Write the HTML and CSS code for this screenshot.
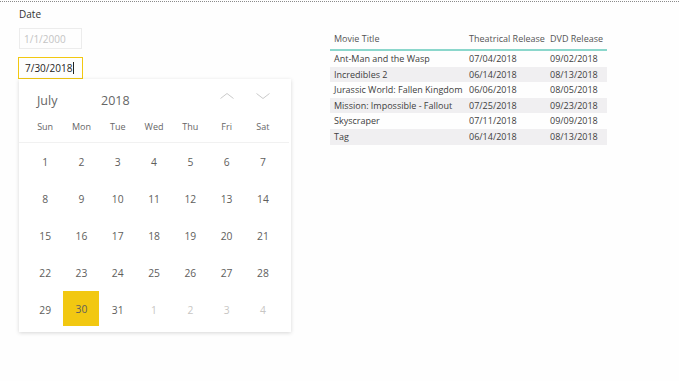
FILE: index.html
```html
<!DOCTYPE html>
<html>
<head>
<meta charset="utf-8">
<link rel="stylesheet" href="styles.css">
</head>
<body>
<div class="topline"></div>
<div class="page">
  <div class="filter">
    <div class="label">Date</div>
    <div class="input start">1/1/2000</div>
    <div class="input end">7/30/2018<span class="caret"></span></div>
    <div class="popup">
      <div class="cal-head">
        <span class="month">July</span>
        <span class="year">2018</span>
        <span class="navs">
          <svg class="chev" width="14" height="6" viewBox="0 0 14 6"><path d="M0.5 5.5 L7 0.5 L13.5 5.5" fill="none" stroke="#cacaca" stroke-width="1"/></svg>
          <svg class="chev" width="14" height="6" viewBox="0 0 14 6"><path d="M0.5 0.5 L7 5.5 L13.5 0.5" fill="none" stroke="#cacaca" stroke-width="1"/></svg>
        </span>
      </div>
      <div class="weekdays">
        <span>Sun</span><span>Mon</span><span>Tue</span><span>Wed</span><span>Thu</span><span>Fri</span><span>Sat</span>
      </div>
      <div class="sep"></div>
      <div class="days">
        <span>1</span><span>2</span><span>3</span><span>4</span><span>5</span><span>6</span><span>7</span>
        <span>8</span><span>9</span><span>10</span><span>11</span><span>12</span><span>13</span><span>14</span>
        <span>15</span><span>16</span><span>17</span><span>18</span><span>19</span><span>20</span><span>21</span>
        <span>22</span><span>23</span><span>24</span><span>25</span><span>26</span><span>27</span><span>28</span>
        <span>29</span><span><b class="sel">30</b></span><span>31</span><span class="other">1</span><span class="other">2</span><span class="other">3</span><span class="other">4</span>
      </div>
    </div>
  </div>
  <div class="tablewrap">
    <div class="row head"><span class="c1">Movie Title</span><span class="c2">Theatrical Release</span><span class="c3">DVD Release</span></div>
    <div class="row"><span class="c1">Ant-Man and the Wasp</span><span class="c2">07/04/2018</span><span class="c3">09/02/2018</span></div>
    <div class="row alt"><span class="c1">Incredibles 2</span><span class="c2">06/14/2018</span><span class="c3">08/13/2018</span></div>
    <div class="row"><span class="c1">Jurassic World: Fallen Kingdom</span><span class="c2">06/06/2018</span><span class="c3">08/05/2018</span></div>
    <div class="row alt"><span class="c1">Mission: Impossible - Fallout</span><span class="c2">07/25/2018</span><span class="c3">09/23/2018</span></div>
    <div class="row"><span class="c1">Skyscraper</span><span class="c2">07/11/2018</span><span class="c3">09/09/2018</span></div>
    <div class="row alt"><span class="c1">Tag</span><span class="c2">06/14/2018</span><span class="c3">08/13/2018</span></div>
  </div>
</div>
</body>
</html>
```

FILE: styles.css
```css
html, body {
  margin: 0;
  padding: 0;
  background: #fefefe;
  font-family: "Open Sans", "Noto Sans", sans-serif;
  color: #333;
  width: 679px;
  height: 381px;
  overflow: hidden;
}
.topline {
  margin-top: 1px;
  border-top: 1px dotted #8a8a8a;
}
.page {
  display: flex;
  align-items: flex-start;
}
.filter {
  padding-left: 18px;
  width: 274px;
}
.label {
  margin-left: 1px;
  margin-top: 5px;
  font-size: 10px;
  line-height: 14px;
  color: #333;
}
.input {
  box-sizing: border-box;
  font-size: 10px;
  display: flex;
  align-items: center;
}
.input.start {
  margin-top: 7px;
  margin-left: 1px;
  width: 63px;
  height: 21px;
  border: 1px solid #ececec;
  padding-left: 4px;
  color: #c4c4c4;
}
.input.end {
  margin-top: 8px;
  width: 65px;
  height: 22px;
  border: 1px solid #f2c811;
  padding-left: 6px;
  color: #252423;
}
.caret {
  display: inline-block;
  width: 1px;
  height: 12px;
  background: #222;
  margin-left: 1px;
}
.popup {
  margin-left: 1px;
  width: 272px;
  height: 253px;
  box-sizing: border-box;
  background: #fff;
  box-shadow: 0 1px 4px rgba(0,0,0,0.16);
}
.cal-head {
  display: flex;
  align-items: center;
  height: 18px;
  padding-top: 12px;
  padding-left: 18px;
  font-size: 12.5px;
  color: #666;
}
.month { width: 64px; }
.year { flex: 1; }
.navs {
  display: flex;
  gap: 22px;
  margin-right: 21px;
  margin-top: -8px;
}
.chev { display: block; }
.weekdays {
  display: grid;
  grid-template-columns: repeat(7, 36.3px);
  margin-top: 3px;
  padding-left: 8px;
  height: 30px;
  line-height: 30px;
  font-size: 9px;
  color: #666;
  text-align: center;
}
.sep {
  height: 1px;
  background: #f1f1f1;
  margin: 0 2px 0 0;
}
.days {
  display: grid;
  grid-template-columns: repeat(7, 36.3px);
  grid-auto-rows: 37px;
  padding-left: 8px;
  font-size: 10.3px;
  color: #605e5c;
}
.days span {
  display: flex;
  align-items: center;
  justify-content: center;
}
.days .other { color: #c8c6c4; }
.sel {
  font-weight: normal;
  display: flex;
  align-items: center;
  justify-content: center;
  width: 36px;
  height: 35px;
  margin-top: -2px;
  background: #f2c811;
  color: #605e5c;
}
.tablewrap {
  margin-left: 38px;
  margin-top: 27px;
  width: 277px;
  font-size: 9px;
  color: #404040;
}
.row {
  display: flex;
  height: 15.6px;
  line-height: 15.6px;
  white-space: nowrap;
}
.row.head {
  height: 20px;
  line-height: 20px;
  color: #555;
  border-bottom: 2px solid #8bd7cc;
}
.row.alt { background: #f0eff1; }
.c1 { width: 136px; padding-left: 4px; box-sizing: border-box; }
.c2 { width: 81px; padding-left: 3px; box-sizing: border-box; }
.c3 { width: 60px; padding-left: 3px; box-sizing: border-box; }
```
